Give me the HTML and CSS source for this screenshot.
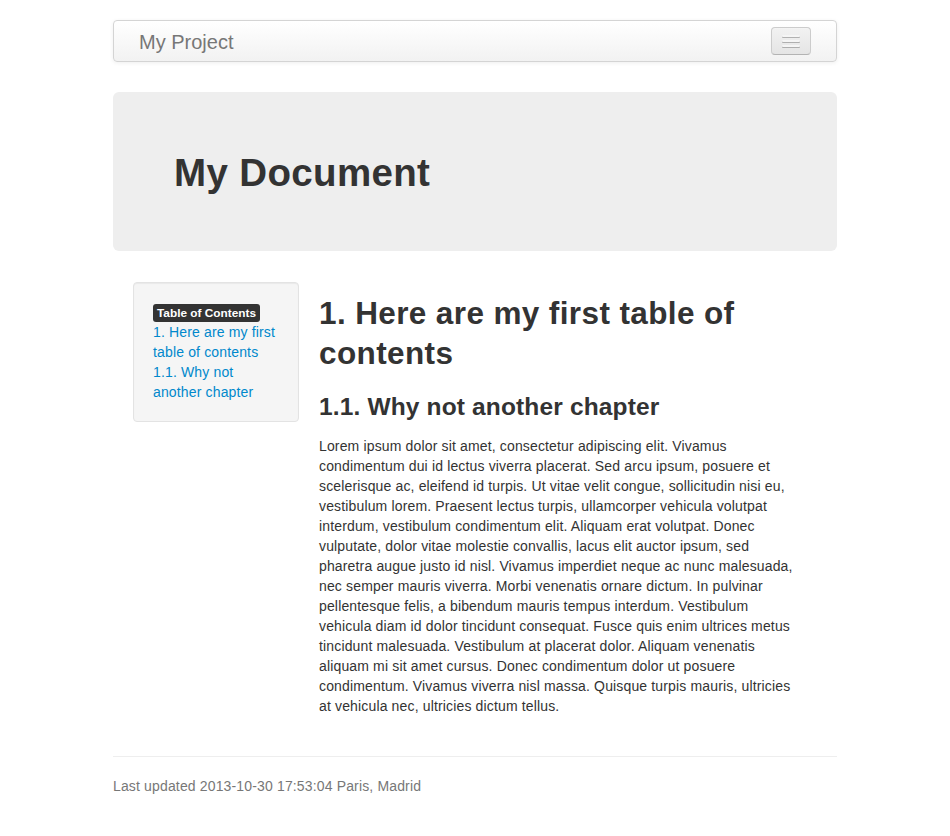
FILE: index.html
```html
<!DOCTYPE html>
<html lang="en">
<head>
  <meta charset="UTF-8">
  <meta name="viewport" content="width=device-width, initial-scale=1.0">
  <title>My Document</title>
  <link rel="stylesheet" href="styles.css">
</head>
<body>
  <div class="container">
    <div class="navbar">
      <a class="brand" href="#">My Project</a>
      <button class="btn-navbar" type="button">
        <span class="icon-bar"></span>
        <span class="icon-bar"></span>
        <span class="icon-bar"></span>
      </button>
    </div>

    <div class="hero-unit">
      <h1>My Document</h1>
    </div>

    <div class="row">
      <div class="sidebar">
        <div class="well">
          <span class="label">Table of Contents</span>
          <ul class="toc">
            <li><a href="#here">1. Here are my first table of contents</a></li>
            <li><a href="#why">1.1. Why not another chapter</a></li>
          </ul>
        </div>
      </div>

      <div class="content">
        <h1 id="here">1. Here are my first table of contents</h1>
        <h3 id="why">1.1. Why not another chapter</h3>
        <p>Lorem ipsum dolor sit amet, consectetur adipiscing elit. Vivamus condimentum dui id lectus viverra placerat. Sed arcu ipsum, posuere et scelerisque ac, eleifend id turpis. Ut vitae velit congue, sollicitudin nisi eu, vestibulum lorem. Praesent lectus turpis, ullamcorper vehicula volutpat interdum, vestibulum condimentum elit. Aliquam erat volutpat. Donec vulputate, dolor vitae molestie convallis, lacus elit auctor ipsum, sed pharetra augue justo id nisl. Vivamus imperdiet neque ac nunc malesuada, nec semper mauris viverra. Morbi venenatis ornare dictum. In pulvinar pellentesque felis, a bibendum mauris tempus interdum. Vestibulum vehicula diam id dolor tincidunt consequat. Fusce quis enim ultrices metus tincidunt malesuada. Vestibulum at placerat dolor. Aliquam venenatis aliquam mi sit amet cursus. Donec condimentum dolor ut posuere condimentum. Vivamus viverra nisl massa. Quisque turpis mauris, ultricies at vehicula nec, ultricies dictum tellus.</p>
      </div>
    </div>

    <hr>

    <footer class="footer">
      Last updated 2013-10-30 17:53:04 Paris, Madrid
    </footer>
  </div>
</body>
</html>
```

FILE: styles.css
```css
    * {
      box-sizing: border-box;
    }

    body {
      margin: 0;
      padding-top: 20px;
      font-family: 'Liberation Sans', Arial, sans-serif;
      font-size: 14px;
      line-height: 20px;
      letter-spacing: 0.15px;
      color: #333;
      background-color: #fff;
    }

    a {
      color: #0088cc;
      text-decoration: none;
    }

    .container {
      width: 724px;
      margin: 0 auto;
    }

    /* navbar */
    .navbar {
      height: 42px;
      display: flex;
      align-items: center;
      justify-content: space-between;
      padding: 0 25px 0 25px;
      margin-bottom: 30px;
      background-image: linear-gradient(to bottom, #ffffff, #f2f2f2);
      border: 1px solid #d4d4d4;
      border-radius: 4px;
      box-shadow: 0 1px 4px rgba(0, 0, 0, 0.065);
    }

    .brand {
      margin-top: 2px;
      font-size: 20px;
      line-height: 20px;
      letter-spacing: 0;
      color: #777;
    }

    .btn-navbar {
      width: 40px;
      height: 28px;
      padding: 7px 10px;
      display: flex;
      flex-direction: column;
      gap: 3px;
      background-image: linear-gradient(to bottom, #f2f2f2, #e5e5e5);
      border: 1px solid #cccccc;
      border-bottom-color: #b3b3b3;
      border-radius: 4px;
      box-shadow: inset 0 1px 0 rgba(255, 255, 255, 0.2), 0 1px 0 rgba(255, 255, 255, 0.075);
      cursor: pointer;
    }

    .icon-bar {
      display: block;
      width: 18px;
      height: 2px;
      border-radius: 1px;
      background-color: #f5f5f5;
      box-shadow: 0 1px 0 rgba(0, 0, 0, 0.25);
    }

    /* hero */
    .hero-unit {
      padding: 61px 60px 58px 61px;
      margin-bottom: 31px;
      background-color: #eeeeee;
      border-radius: 6px;
    }

    .hero-unit h1 {
      margin: 0;
      font-size: 38.5px;
      line-height: 40px;
      font-weight: bold;
      letter-spacing: 0.35px;
      color: #333;
    }

    /* body columns */
    .row {
      display: flex;
      align-items: flex-start;
      padding-left: 20px;
    }

    .sidebar {
      width: 166px;
      flex-shrink: 0;
    }

    .well {
      padding: 19px;
      background-color: #f5f5f5;
      border: 1px solid #e3e3e3;
      border-radius: 4px;
      box-shadow: inset 0 1px 1px rgba(0, 0, 0, 0.05);
    }

    .label {
      display: inline-block;
      padding: 2px 4px;
      font-size: 11.844px;
      font-weight: bold;
      line-height: 14px;
      letter-spacing: 0;
      color: #fff;
      background-color: #333;
      border-radius: 3px;
      vertical-align: baseline;
    }

    .toc {
      list-style: none;
      margin: 0;
      padding: 0;
    }

    .content {
      width: 478px;
      margin-left: 20px;
    }

    .content h1 {
      margin: 11px 0 0;
      font-size: 31.5px;
      line-height: 40px;
      font-weight: bold;
      letter-spacing: 0.38px;
    }

    .content h3 {
      margin: 14px 0 9px;
      font-size: 24.5px;
      line-height: 40px;
      font-weight: bold;
    }

    .content p {
      margin: 0 0 10px;
    }

    hr {
      margin: 30px 0 18px;
      border: 0;
      border-top: 1px solid #eeeeee;
      border-bottom: 1px solid #ffffff;
    }

    .footer {
      color: #777;
    }
```
